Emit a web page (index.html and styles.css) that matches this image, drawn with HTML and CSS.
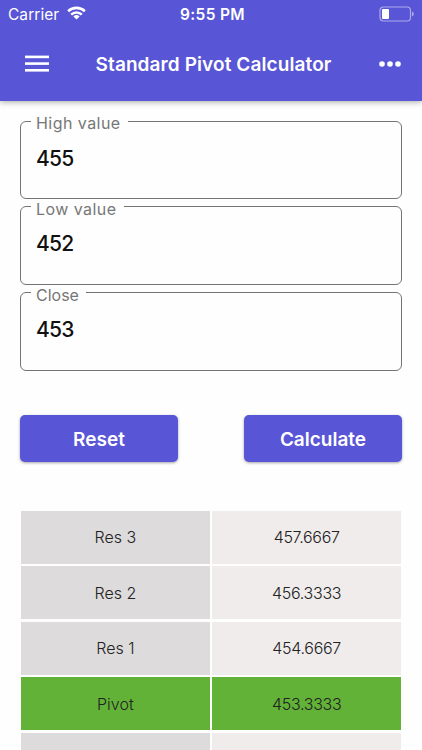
FILE: index.html
```html
<!DOCTYPE html>
<html lang="en">
<head>
    <meta charset="UTF-8">
    <meta name="viewport" content="width=device-width, initial-scale=1.0">
    <title>Standard Pivot Calculator</title>
    <link rel="stylesheet" href="styles.css">
</head>
<body>

<header class="header">
    <div class="status">
        <div class="status-left">
            <span class="carrier">Carrier</span>
            <svg class="wifi" width="19" height="14" viewBox="0 0 20 14" fill="none" stroke="#fff" stroke-width="2.7">
                <path d="M1.2 5.2a12.6 12.6 0 0 1 17.6 0"/>
                <path d="M4.4 8.7a8 8 0 0 1 11.2 0"/>
                <path d="M10 13.8L6.7 10.6a4.8 4.8 0 0 1 6.6 0z" fill="#fff" stroke="none"/>
            </svg>
        </div>
        <span class="time">9:55 PM</span>
        <svg class="battery" width="36" height="16" viewBox="0 0 36 16">
            <rect x="1" y="1" width="30.5" height="14" rx="3.5" fill="none" stroke="#fff" stroke-opacity=".5" stroke-width="1.2"/>
            <rect x="3" y="3" width="7" height="10" rx="1" fill="#fff"/>
            <path d="M33 5.5q1.8 .6 1.8 2.5t-1.8 2.5z" fill="#fff" fill-opacity=".5"/>
        </svg>
    </div>
    <div class="toolbar">
        <svg class="menu" width="24" height="18" viewBox="0 0 24 18" fill="#fff">
            <rect y="0.6" width="24" height="2.6"/>
            <rect y="7.3" width="24" height="2.6"/>
            <rect y="14" width="24" height="2.6"/>
        </svg>
        <h1 class="title">Standard Pivot Calculator</h1>
        <svg class="more" width="22" height="6" viewBox="0 0 22 6" fill="#fff">
            <circle cx="3" cy="3" r="2.8"/>
            <circle cx="11" cy="3" r="2.8"/>
            <circle cx="19" cy="3" r="2.8"/>
        </svg>
    </div>
</header>

<main class="content">
    <div class="fields">
        <fieldset class="field">
            <legend>High value</legend>
            <input type="text" value="455" aria-label="High value">
        </fieldset>
        <fieldset class="field">
            <legend>Low value</legend>
            <input type="text" value="452" aria-label="Low value">
        </fieldset>
        <fieldset class="field">
            <legend class="short">Close</legend>
            <input type="text" value="453" aria-label="Close">
        </fieldset>
    </div>

    <div class="actions">
        <button type="button">Reset</button>
        <button type="button">Calculate</button>
    </div>

    <div class="results">
        <div class="label">Res 3</div>
        <div class="value">457.6667</div>
        <div class="label">Res 2</div>
        <div class="value">456.3333</div>
        <div class="label">Res 1</div>
        <div class="value">454.6667</div>
        <div class="label pivot">Pivot</div>
        <div class="value pivot">453.3333</div>
        <div class="label"></div>
        <div class="value"></div>
    </div>
</main>

</body>
</html>
```

FILE: styles.css
```css
* {
    box-sizing: border-box;
}
body {
    margin: 0;
    height: 750px;
    overflow: hidden;
    background-color: #fefefe;
    font-family: Inter, "Open Sans", sans-serif;
    color: #111;
}
svg {
    display: block;
}
.header {
    height: 100.5px;
    background-color: #5855d6;
    color: #fff;
    box-shadow: 0 1px 6px rgba(0, 0, 0, 0.35);
}
.status {
    display: grid;
    grid-template-columns: 1fr auto 1fr;
    align-items: center;
    height: 28px;
    padding: 0 7px 0 8px;
}
.status-left {
    display: flex;
    align-items: center;
    gap: 8px;
}
.carrier {
    font-size: 15.5px;
    letter-spacing: 0.05px;
}
.wifi {
    margin-top: -2px;
}
.time {
    padding-left: 2px;
    font-size: 15.5px;
    font-weight: 600;
    letter-spacing: 0.35px;
}
.battery {
    justify-self: end;
}
.toolbar {
    display: flex;
    align-items: center;
    justify-content: space-between;
    height: 72px;
    padding: 0 21px 0 25px;
}
.title {
    margin: 0 1px 0 0;
    font-size: 19px;
    font-weight: 600;
    letter-spacing: 0.1px;
}
.content {
    padding: 19.7px 20px 0;
}
.fields {
    display: flex;
    flex-direction: column;
    gap: 6.7px;
}
.field {
    height: 79px;
    margin: 0;
    padding: 0 15px 0 10px;
    border: 1px solid #747474;
    border-radius: 6px;
}
.field legend {
    height: 2px;
    padding: 0 7px 0 5px;
    font-size: 16px;
    line-height: 7px;
    letter-spacing: 0.45px;
    color: #777;
}
.field legend.short {
    letter-spacing: 0;
}
.field input {
    display: block;
    width: 100%;
    height: 32px;
    margin-top: 20px;
    padding: 0 0 0 5px;
    border: none;
    outline: none;
    background: none;
    font-family: inherit;
    font-size: 21px;
    font-weight: 500;
    letter-spacing: -0.8px;
    color: #111;
}
.actions {
    display: flex;
    justify-content: space-between;
    margin-top: 44.4px;
}
.actions button {
    width: 158px;
    height: 47px;
    padding: 2px 0 0;
    border: none;
    border-radius: 5px;
    background-color: #5855d6;
    box-shadow: 0 1px 3px rgba(0, 0, 0, 0.35);
    color: #fff;
    font-family: inherit;
    font-size: 19px;
    font-weight: 600;
}
.results {
    display: grid;
    grid-template-columns: 1fr 1fr;
    grid-auto-rows: 52.8px;
    gap: 2.6px;
    margin: 49px 1px 0;
}
.label,
.value {
    display: flex;
    align-items: center;
    justify-content: center;
    font-size: 16px;
    font-weight: 300;
    color: #222;
}
.label {
    background-color: #dddbdc;
}
.value {
    background-color: #efeceb;
    letter-spacing: -0.3px;
}
.pivot {
    background-color: #62b238;
}
```
